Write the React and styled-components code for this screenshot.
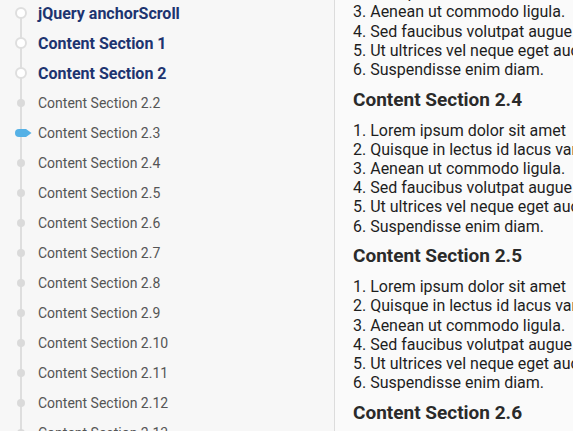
import React from 'react'
import styled, { createGlobalStyle } from 'styled-components'

const GlobalStyle = createGlobalStyle`
  html, body {
    margin: 0;
    padding: 0;
    height: 100%;
    overflow: hidden;
    background: #fafafa;
  }
  body {
    font-family: Roboto, "Liberation Sans", Arial, sans-serif;
  }
`

const Page = styled.div`
  display: grid;
  grid-template-columns: 335px 1fr;
  height: 431px;
  overflow: hidden;
`

// ----- sidebar ----- //
const Sidebar = styled.nav`
  background: #f7f7f7;
  border-right: 1px solid #dcdcdc;
  overflow: hidden;
`

const NavList = styled.ul`
  list-style: none;
  margin: -2px 0 0;
  padding: 0 0 0 15px;
`

const NavItem = styled.li`
  display: flex;
  align-items: center;
  gap: 11px;
  height: 30px;
`

const Rail = styled.span`
  position: relative;
  display: flex;
  align-items: center;
  justify-content: center;
  width: 12px;
  align-self: stretch;
  background: linear-gradient(
      to right,
      transparent 5px,
      #dedede 5px,
      #dedede 7px,
      transparent 7px
    )
    ${p => (p.$first ? 'center 15px / 100% 100% no-repeat' : '0 0 / 100% 100% no-repeat')};
`

const Ring = styled.span`
  width: 8px;
  height: 8px;
  border-radius: 50%;
  border: 2px solid #dedede;
  background: #fff;
`

const Dot = styled.span`
  width: 8px;
  height: 8px;
  border-radius: 50%;
  background: #dadada;
`

const Pointer = styled.svg`
  position: absolute;
  left: 0;
  top: 11px;
`

const NavLink = styled.a`
  text-decoration: none;
  white-space: nowrap;
  font-size: ${p => (p.$top ? '16px' : '14px')};
  font-weight: ${p => (p.$top ? 700 : 400)};
  color: ${p => (p.$top ? '#1d3470' : '#555')};
`

// ----- content ----- //
const Content = styled.main`
  padding-left: 18px;
  overflow: hidden;
  color: #1e1e1e;
`

const Scroller = styled.div`
  margin-top: -16.8px;
`

const Heading = styled.h3`
  margin: 9.4px 0 10px;
  font-size: 19px;
  line-height: 22px;
  font-weight: 700;
  color: #2a2a2a;
`

const Items = styled.ol`
  margin: 0;
  padding: 0;
  list-style-position: inside;
  font-size: 16px;
  line-height: 19.2px;
  white-space: nowrap;
`

const nav = [
  { label: 'jQuery anchorScroll', top: true },
  { label: 'Content Section 1', top: true },
  { label: 'Content Section 2', top: true },
  ...Array.from({ length: 12 }, (_, i) => ({ label: `Content Section 2.${i + 2}` }))
]

const lorem = [
  'Lorem ipsum dolor sit amet',
  'Quisque in lectus id lacus varius',
  'Aenean ut commodo ligula.',
  'Sed faucibus volutpat augue',
  'Ut ultrices vel neque eget auctor.',
  'Suspendisse enim diam.'
]

function Marker({ item, active }) {
  if (active) {
    return (
      <Pointer width="17" height="8" viewBox="0 0 17 8">
        <path d="M4 0 H11 L16.5 4 L11 8 H4 A4 4 0 0 1 4 0 Z" fill="#55b1e6" />
      </Pointer>
    )
  }
  return item.top ? <Ring /> : <Dot />
}

export default function App() {
  const activeLabel = 'Content Section 2.3'
  return (
    <Page>
      <GlobalStyle />
      <Sidebar>
        <NavList>
          {nav.map((item, i) => (
            <NavItem key={item.label}>
              <Rail $first={i === 0}>
                <Marker item={item} active={item.label === activeLabel} />
              </Rail>
              <NavLink href="#" $top={item.top}>{item.label}</NavLink>
            </NavItem>
          ))}
        </NavList>
      </Sidebar>
      <Content>
        <Scroller>
          <Items start={2}>
            {lorem.slice(1).map(t => <li key={t}>{t}</li>)}
          </Items>
          {['2.4', '2.5', '2.6'].map(n => (
            <section key={n}>
              <Heading>Content Section {n}</Heading>
              <Items>
                {lorem.map(t => <li key={t}>{t}</li>)}
              </Items>
            </section>
          ))}
        </Scroller>
      </Content>
    </Page>
  )
}
